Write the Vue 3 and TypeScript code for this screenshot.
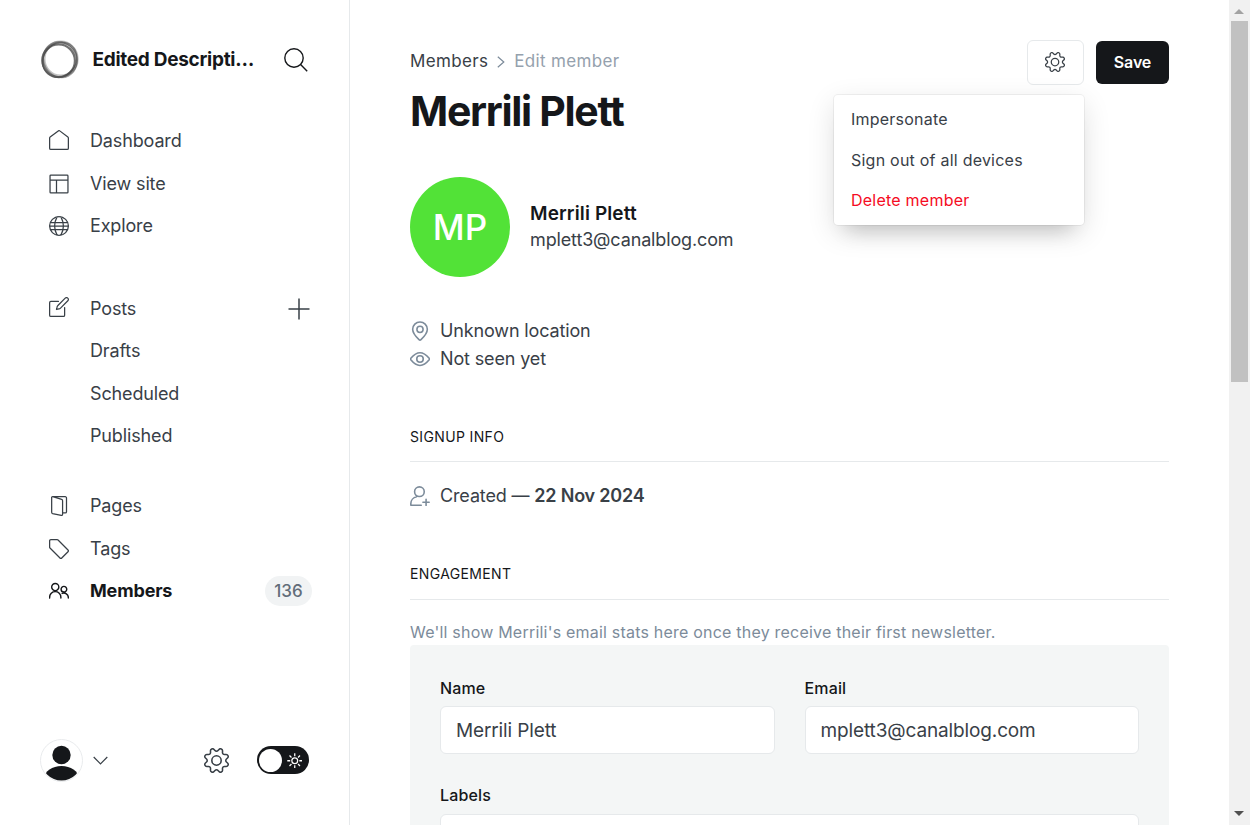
<script setup lang="ts">
import { ref } from 'vue'

interface NavItem {
  label: string
  icon?: string
  count?: number
  active?: boolean
  add?: boolean
}

const navGroups: NavItem[][] = [
  [
    { label: 'Dashboard', icon: 'home' },
    { label: 'View site', icon: 'layout' },
    { label: 'Explore', icon: 'globe' },
  ],
  [
    { label: 'Posts', icon: 'pen', add: true },
    { label: 'Drafts' },
    { label: 'Scheduled' },
    { label: 'Published' },
  ],
  [
    { label: 'Pages', icon: 'pages' },
    { label: 'Tags', icon: 'tag' },
    { label: 'Members', icon: 'members', count: 136, active: true },
  ],
]

const icons: Record<string, string> = {
  home: 'M.75 9.6v12.15a1.5 1.5 0 0 0 1.5 1.5h19.5a1.5 1.5 0 0 0 1.5-1.5V9.6a1.5 1.5 0 0 0-.6-1.2L12.9 1.05a1.5 1.5 0 0 0-1.8 0L1.35 8.4a1.5 1.5 0 0 0-.6 1.2Z',
  layout: 'M2.25 1.25h19.5a1 1 0 0 1 1 1v19.5a1 1 0 0 1-1 1H2.25a1 1 0 0 1-1-1V2.25a1 1 0 0 1 1-1ZM1.25 7.25h21.5M9 7.25v15.5',
  globe: 'M12 .75a11.25 11.25 0 1 0 0 22.5a11.25 11.25 0 1 0 0-22.5ZM1.5 16.2h21M1.5 7.8h21M.75 12h22.5M9.7 1C5.9 8 5.9 16 9.7 23M14.3 1c3.8 7 3.8 15 0 22',
  pen: 'M11.3 5.25H2.25a1.5 1.5 0 0 0-1.5 1.5v15a1.5 1.5 0 0 0 1.5 1.5h15a1.5 1.5 0 0 0 1.5-1.5V12.7M22.6 1.4a2.2 2.2 0 0 0-3.15 0L10.7 10.15a4 4 0 0 0-1.05 2L9 15l2.85-.65a4 4 0 0 0 2-1.05L22.6 4.55a2.2 2.2 0 0 0 0-3.15Z',
  pages: 'M3.2 2.2v17.4a1.5 1.5 0 0 0 1.1 1.45l10.4 2.2a1.3 1.3 0 0 0 1.6-1.25V5.6a1.5 1.5 0 0 0-1.1-1.45L4.5.85A1.1 1.1 0 0 0 3.2 2.2ZM4.5.85h15a1.5 1.5 0 0 1 1.5 1.5v16.4a1.5 1.5 0 0 1-1.5 1.5h-3.2',
  tag: 'M2.25.75H9.8a1.5 1.5 0 0 1 1.06.44L22.8 13.13a1.5 1.5 0 0 1 0 2.12l-7.5 7.5a1.5 1.5 0 0 1-2.12 0L1.19 10.86A1.5 1.5 0 0 1 .75 9.8V2.25a1.5 1.5 0 0 1 1.5-1.5Z',
  members: 'M7.5 3a4.3 4.3 0 1 0 0 8.6a4.3 4.3 0 1 0 0-8.6ZM.75 20.4v-1a6.75 6.75 0 0 1 13.5 0v1M17.9 6.4a3.4 3.4 0 1 0 0 6.8a3.4 3.4 0 1 0 0-6.8ZM15.8 14.9a5.3 5.3 0 0 1 7.4 4.9v.6',
}

const gear =
  'M10.546 2.438a1.957 1.957 0 0 0 2.908 0L14.4 1.4a1.959 1.959 0 0 1 3.41 1.413l-.071 1.4A1.958 1.958 0 0 0 19.79 6.27l1.4-.071A1.959 1.959 0 0 1 22.6 9.606l-1.042.94a1.96 1.96 0 0 0 0 2.909l1.042.94a1.959 1.959 0 0 1-1.413 3.41l-1.4-.071a1.958 1.958 0 0 0-2.056 2.056l.071 1.4A1.959 1.959 0 0 1 14.4 22.6l-.941-1.041a1.959 1.959 0 0 0-2.908 0L9.606 22.6A1.959 1.959 0 0 1 6.2 21.192l.072-1.4a1.958 1.958 0 0 0-2.056-2.056l-1.4.071A1.958 1.958 0 0 1 1.4 14.4l1.041-.94a1.96 1.96 0 0 0 0-2.909L1.4 9.606A1.958 1.958 0 0 1 2.809 6.2l1.4.071a1.958 1.958 0 0 0 2.058-2.06L6.2 2.81A1.959 1.959 0 0 1 9.606 1.4Z M12 7.5a4.5 4.5 0 1 0 0 9a4.5 4.5 0 1 0 0-9Z'

const name = ref('Merrili Plett')
const email = ref('mplett3@canalblog.com')
</script>

<template>
  <div class="app">
    <nav class="sidebar">
      <header class="brand">
        <svg class="logo" viewBox="0 0 40 40" fill="none">
          <ellipse cx="20.6" cy="19" rx="16.6" ry="16.9" stroke="#777" stroke-width="3" opacity=".45" />
          <ellipse cx="18.7" cy="20.7" rx="16.2" ry="16.4" stroke="#333" stroke-width="2.2" opacity=".7" />
          <ellipse cx="20" cy="19.7" rx="18.4" ry="16.2" stroke="#444" stroke-width="1.3" opacity=".6" transform="rotate(-50 20 20)" />
          <ellipse cx="19.8" cy="19.8" rx="18.2" ry="16.4" stroke="#555" stroke-width="1.5" opacity=".55" transform="rotate(62 20 20)" />
          <ellipse cx="19.5" cy="20" rx="17.8" ry="17.4" stroke="#555" stroke-width="1" opacity=".6" />
        </svg>
        <span class="site-title">Edited Descripti…</span>
        <svg class="search" viewBox="0 0 24 24"><circle cx="10" cy="10" r="9.2" /><path d="M16.6 16.6 23.2 23.2" /></svg>
      </header>

      <ul v-for="(group, g) in navGroups" :key="g" class="group">
        <li v-for="item in group" :key="item.label" class="item" :class="{ active: item.active }">
          <span class="icon-slot">
            <svg v-if="item.icon" class="nav-icon" :class="item.icon" viewBox="0 0 24 24"><path :d="icons[item.icon]" /></svg>
          </span>
          <span class="label">{{ item.label }}</span>
          <svg v-if="item.add" class="plus" viewBox="0 0 22 22"><path d="M11 .5v21M.5 11h21" /></svg>
          <span v-if="item.count" class="count">{{ item.count }}</span>
        </li>
      </ul>

      <footer class="foot">
        <svg class="user" viewBox="0 0 43 43">
          <defs><clipPath id="face"><circle cx="21.5" cy="21.5" r="20" /></clipPath></defs>
          <circle cx="21.5" cy="21.5" r="21" fill="#fff" stroke="#e9ebed" />
          <g clip-path="url(#face)" fill="#15171a">
            <circle cx="21.5" cy="16" r="9.2" />
            <ellipse cx="21.5" cy="39" rx="17" ry="12" />
          </g>
        </svg>
        <svg class="chev" viewBox="0 0 15 9"><path d="m.7 1 6.8 6.8L14.3 1" /></svg>
        <svg class="cog" viewBox="0 0 24 24"><path :d="gear" /></svg>
        <span class="toggle">
          <i class="knob"></i>
          <svg class="sun" viewBox="0 0 16 16"><circle cx="8" cy="8" r="3" /><path d="M8 .3v3M8 12.7v3M.3 8h3M12.7 8h3M2.6 2.6l2 2M11.4 11.4l2 2M2.6 13.4l2-2M11.4 4.6l2-2" /></svg>
        </span>
      </footer>
    </nav>

    <main class="main">
      <header class="top">
        <div>
          <div class="crumbs">
            <span>Members</span>
            <svg viewBox="0 0 8 12"><path d="m.8.8 6 5.2-6 5.2" /></svg>
            <span class="current">Edit member</span>
          </div>
          <h1>Merrili Plett</h1>
        </div>
        <div class="actions">
          <div class="menu-wrap">
            <button class="gear-btn"><svg viewBox="0 0 24 24"><path :d="gear" /></svg></button>
            <ul class="menu">
              <li>Impersonate</li>
              <li>Sign out of all devices</li>
              <li class="danger">Delete member</li>
            </ul>
          </div>
          <button class="save">Save</button>
        </div>
      </header>

      <section class="profile">
        <div class="avatar">MP</div>
        <div>
          <h3>Merrili Plett</h3>
          <p>mplett3@canalblog.com</p>
        </div>
      </section>

      <section class="facts">
        <p>
          <svg viewBox="0 0 24 24"><path d="M12 1.2a8.8 8.8 0 0 1 8.8 8.8c0 4.2-5 10-7.6 12.4a1.8 1.8 0 0 1-2.4 0C8.2 20 3.2 14.2 3.2 10A8.8 8.8 0 0 1 12 1.2Z" /><circle cx="12" cy="10" r="3.7" /></svg>
          <span>Unknown location</span>
        </p>
        <p>
          <svg viewBox="0 0 24 24"><path d="M23 11.2C20.5 8.2 16.4 4.5 12 4.5S3.5 8.2 1 11.2a1.4 1.4 0 0 0 0 1.7C3.5 16 7.6 19.7 12 19.7S20.500 16 23 12.900a1.400 1.400 0 0 0 0-1.700Z" /><circle cx="12" cy="12" r="3.9" /></svg>
          <span>Not seen yet</span>
        </p>
      </section>

      <section class="block signup">
        <h4>Signup info</h4>
        <p class="created">
          <svg viewBox="0 0 24 24"><circle cx="11.3" cy="6.8" r="5.8" /><path d="M7.8 11.5v1.3C4 13.7 1 17.2 1 21v2h12.5M19.3 15.800v7.500M15.500 19.500H23" /></svg>
          <span>Created — <b>22 Nov 2024</b></span>
        </p>
      </section>

      <section class="block engagement">
        <h4>Engagement</h4>
        <p class="hint">We'll show Merrili's email stats here once they receive their first newsletter.</p>
      </section>

      <form class="card" @submit.prevent>
        <label><span>Name</span><input v-model="name" type="text" /></label>
        <label><span>Email</span><input v-model="email" type="text" /></label>
        <label class="wide"><span>Labels</span><input type="text" /></label>
      </form>
    </main>

    <div class="scrollbar">
      <i class="arrow up"></i>
      <i class="thumb"></i>
      <i class="arrow down"></i>
    </div>
  </div>
</template>

<style>
body {
  margin: 0;
  overflow: hidden;
}
</style>

<style scoped>
* {
  box-sizing: border-box;
  margin: 0;
}
.app {
  display: flex;
  width: 1250px;
  height: 825px;
  overflow: hidden;
  background: #fff;
  color: #394047;
  font-family: Inter, 'Liberation Sans', sans-serif;
  font-size: 18px;
  font-weight: 400;
  letter-spacing: -0.14px;
}
svg {
  fill: none;
  flex: none;
}
ul {
  padding: 0;
  list-style: none;
}
input,
button {
  font: inherit;
}
.sidebar {
  display: flex;
  flex-direction: column;
  flex: none;
  width: 350px;
  border-right: 1px solid #e6e9eb;
}
.brand {
  display: flex;
  align-items: center;
  height: 40px;
  margin: 40px 0 39.5px 40px;
}
.logo {
  width: 40px;
  height: 40px;
}
.site-title {
  width: 169.5px;
  margin-left: 12.5px;
  padding-bottom: 2px;
  white-space: nowrap;
  color: #15171a;
  font-size: 19px;
  font-weight: 700;
  letter-spacing: -0.28px;
}
.search {
  width: 24px;
  height: 24px;
  margin-left: 22px;
  stroke: #15171a;
  stroke-width: 1.4;
}
.group {
  margin-bottom: 27.5px;
}
.group:first-of-type {
  margin-bottom: 40px;
}
.item {
  display: flex;
  align-items: center;
  height: 42.5px;
  padding-right: 37px;
}
.icon-slot {
  display: flex;
  width: 90px;
  padding-left: 49px;
}
.nav-icon {
  width: 20px;
  height: 20px;
  stroke: #394047;
  stroke-width: 1.5;
  stroke-linejoin: round;
  stroke-linecap: round;
}
.layout,
.tag {
  margin-top: 1px;
}
.home {
  margin-bottom: 1px;
}
.pen {
  margin-bottom: 2px;
}
.label {
  flex: 1;
}
.active {
  color: #15171a;
  font-weight: 700;
  letter-spacing: -0.16px;
}
.active .nav-icon {
  stroke: #15171a;
  stroke-width: 1.7;
}
.plus {
  width: 22px;
  height: 22px;
  margin: 2px 2px 0 0;
  stroke: #394047;
  stroke-width: 1.5;
}
.count {
  width: 47px;
  height: 30px;
  border-radius: 15px;
  background: #f1f3f4;
  color: #626d79;
  font-size: 17px;
  font-weight: 500;
  line-height: 30px;
  letter-spacing: 0;
  text-align: center;
}
.foot {
  display: flex;
  align-items: center;
  height: 42px;
  margin: auto 40px 44px;
}
.user {
  width: 43px;
  height: 43px;
}
.chev {
  width: 15px;
  height: 9px;
  margin-left: 10px;
  stroke: #394047;
  stroke-width: 1.2;
}
.cog {
  width: 25px;
  height: 25px;
  margin-left: 96px;
  stroke: #394047;
  stroke-width: 1.5;
}
.toggle {
  display: flex;
  align-items: center;
  flex: none;
  width: 52px;
  height: 28px;
  margin-left: 28px;
  padding: 0 7px 0 2px;
  border-radius: 14px;
  background: #15171a;
}
.knob {
  width: 23px;
  height: 23px;
  margin-right: 4.5px;
  border-radius: 50%;
  background: #fff;
}
.sun {
  width: 15.5px;
  height: 15.5px;
  margin-top: 1px;
  stroke: #fff;
  stroke-width: 1.3;
}
.main {
  flex: none;
  width: 879px;
  padding: 40px 60px 0;
}
.top {
  display: flex;
  justify-content: space-between;
  height: 137px;
}
.crumbs {
  display: flex;
  align-items: center;
  height: 42px;
  font-size: 17px;
  letter-spacing: 0.34px;
}
.crumbs svg {
  width: 8px;
  height: 12px;
  margin: 1px 9px 0;
  stroke: #7c8b9a;
  stroke-width: 1.2;
}
.current {
  color: #95a1ad;
}
h1 {
  color: #15171a;
  font-size: 41px;
  font-weight: 700;
  line-height: 58px;
  letter-spacing: -1.3px;
}
.actions {
  display: flex;
  gap: 12px;
}
.menu-wrap {
  position: relative;
}
.gear-btn,
.save {
  display: flex;
  align-items: center;
  justify-content: center;
  padding: 0;
  border-radius: 6px;
}
.gear-btn {
  width: 57px;
  height: 45px;
  border: 1px solid #e6e9eb;
  background: #fff;
}
.gear-btn svg {
  width: 20px;
  height: 20px;
  margin: 0 1px 1px 0;
  stroke: #394047;
  stroke-width: 1.5;
}
.save {
  width: 73px;
  height: 43px;
  margin-top: 1px;
  padding-bottom: 2px;
  border: 0;
  background: #15171a;
  color: #fff;
  font-size: 16px;
  font-weight: 600;
  letter-spacing: -0.1px;
}
.menu {
  position: absolute;
  top: 55px;
  right: 0;
  z-index: 2;
  width: 250px;
  height: 130px;
  padding: 4px 17px;
  border-radius: 4px;
  background: #fff;
  box-shadow: 0 0 0 1px rgba(0, 0, 0, 0.05), 0 8px 28px rgba(0, 0, 0, 0.12), 0 18px 20px -14px rgba(0, 0, 0, 0.18);
  font-size: 16px;
  letter-spacing: 0.23px;
}
.menu li {
  line-height: 40.5px;
  white-space: nowrap;
}
.danger {
  color: #f50b23;
}
.profile {
  display: flex;
  align-items: center;
  gap: 20px;
  height: 100px;
}
.avatar {
  width: 100px;
  height: 100px;
  border-radius: 50%;
  background: #52e237;
  color: #fff;
  font-size: 35px;
  font-weight: 500;
  line-height: 101px;
  letter-spacing: 0;
  text-align: center;
}
h3 {
  color: #15171a;
  font-size: 19px;
  font-weight: 600;
  line-height: 27px;
  letter-spacing: 0.12px;
}
.profile p {
  line-height: 25px;
  padding-bottom: 2px;
}
.facts {
  padding-top: 40px;
}
.facts p,
.created {
  display: flex;
  align-items: center;
  gap: 10px;
  height: 28px;
}
.facts span,
.created span {
  padding-bottom: 2px;
}
.facts svg,
.created svg {
  width: 20px;
  height: 20px;
  stroke: #7c8b9a;
  stroke-width: 1.9;
  stroke-linecap: round;
  stroke-linejoin: round;
}
h4 {
  height: 36px;
  border-bottom: 1px solid #e6e9eb;
  color: #15171a;
  font-size: 14px;
  font-weight: 400;
  line-height: 22px;
  letter-spacing: 0.36px;
  text-transform: uppercase;
}
.signup {
  padding-top: 53px;
}
.created {
  margin-top: 20px;
}
.created b {
  font-weight: 600;
  letter-spacing: -0.2px;
}
.engagement {
  padding-top: 54px;
}
.engagement h4 {
  line-height: 20px;
}
.hint {
  height: 45px;
  padding-top: 20px;
  color: #7c8b9a;
  font-size: 16px;
  line-height: 24px;
  letter-spacing: 0.21px;
}
.card {
  display: grid;
  grid-template-columns: 1fr 1fr;
  gap: 28px 30px;
  height: 300px;
  padding: 30px;
  align-content: start;
  border-radius: 4px;
  background: #f4f6f6;
}
.card label {
  display: block;
}
.card span {
  display: block;
  height: 31px;
  color: #15171a;
  font-size: 16px;
  font-weight: 500;
  line-height: 26px;
  letter-spacing: 0.15px;
}
.card input {
  display: block;
  width: 100%;
  height: 48px;
  padding: 0 15px;
  border: 1px solid #e6e9eb;
  border-radius: 6px;
  background: #fff;
  color: #394047;
  font-size: 19px;
  letter-spacing: -0.13px;
}
.wide {
  grid-column: 1 / -1;
}
.card .wide span {
  height: 32px;
}
.scrollbar {
  display: flex;
  flex-direction: column;
  align-items: center;
  width: 21px;
  background: #f1f1f1;
}
.arrow {
  border: 5px solid transparent;
}
.up {
  margin: 9px 1px 0 0;
  border-top: 0;
  border-bottom-color: #a3a3a3;
}
.thumb {
  width: 17px;
  height: 361px;
  margin-top: 7px;
  background: #c1c1c1;
}
.down {
  margin: auto 1px 9px 0;
  border-bottom: 0;
  border-top-color: #505050;
}
</style>
